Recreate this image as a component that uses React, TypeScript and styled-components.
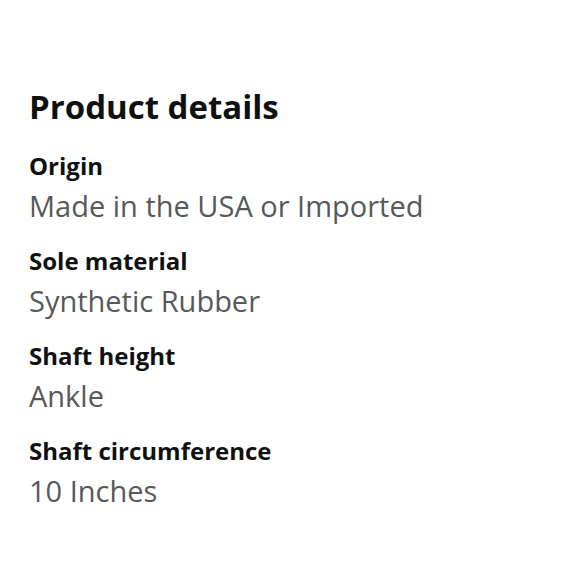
import React from "react";
import styled, { createGlobalStyle } from "styled-components";

const Global = createGlobalStyle`
  html, body { margin: 0; padding: 0; background: #fff; }
  body { font-family: "Open Sans", "Noto Sans", sans-serif; }
`;

const Page = styled.div`
  width: 580px;
  height: 580px;
  box-sizing: border-box;
  padding: 87px 29px 0 29px;
`;

const Title = styled.h2`
  margin: 0 0 22px 0;
  font-size: 33px;
  line-height: 40px;
  font-weight: 700;
  color: #0f1111;
`;

const List = styled.dl`
  margin: 0;
  display: flex;
  flex-direction: column;
  gap: 15px;
`;

const Item = styled.div`
  display: flex;
  flex-direction: column;
`;

const Label = styled.dt`
  font-size: 24px;
  line-height: 33px;
  font-weight: 700;
  color: #0f1111;
`;

const Value = styled.dd`
  margin: 0;
  font-size: 29px;
  line-height: 47px;
  font-weight: 400;
  color: #565959;
`;

const details = [
  { label: "Origin", value: "Made in the USA or Imported" },
  { label: "Sole material", value: "Synthetic Rubber" },
  { label: "Shaft height", value: "Ankle" },
  { label: "Shaft circumference", value: "10 Inches" },
];

export default function App() {
  return (
    <>
      <Global />
      <Page>
        <Title>Product details</Title>
        <List>
          {details.map((d) => (
            <Item key={d.label}>
              <Label>{d.label}</Label>
              <Value>{d.value}</Value>
            </Item>
          ))}
        </List>
      </Page>
    </>
  );
}
